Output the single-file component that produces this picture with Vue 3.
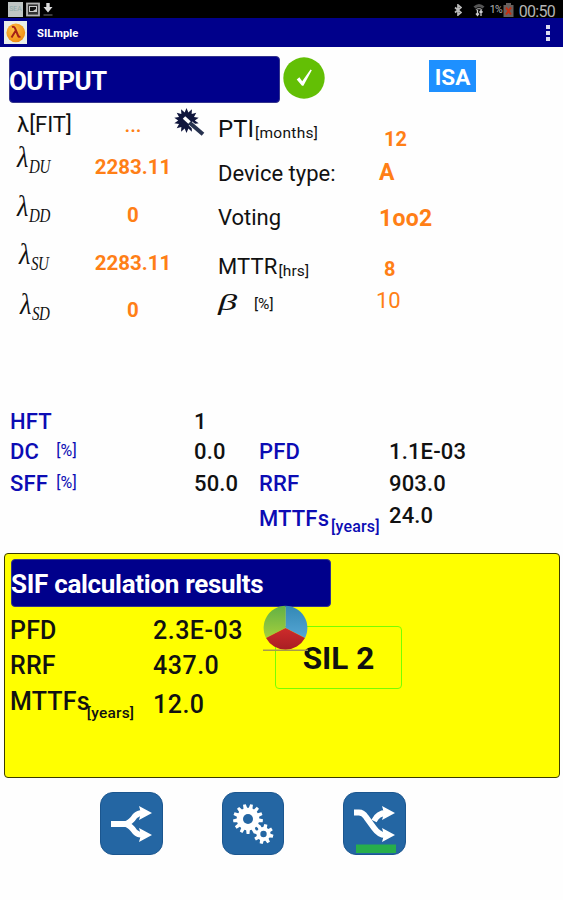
<template>
  <div class="screen">
    <div class="status-bar">
      <div class="status-left">
        <span class="thumb">SEA</span>
        <svg width="14" height="15" viewBox="0 0 14 15">
          <rect x="1" y="1.5" width="12" height="12" fill="#333" stroke="#b4b4b4" stroke-width="1.8" />
          <path d="M3 4H11V10H3Z" fill="#ccc" />
          <path d="M4 5H10V7L7 9H4Z" fill="#111" />
        </svg>
        <svg width="10" height="15" viewBox="0 0 10 15">
          <path d="M3.3 1H6.7V5H9.5L5 10.5L.5 5H3.3Z" fill="#ddd" />
          <path d="M.5 13H9.5" stroke="#555" stroke-width="1.4" />
        </svg>
      </div>
      <div class="status-right">
        <svg class="bluetooth" width="8" height="12" viewBox="0 0 8 12">
          <path d="M1 3.5L7 8.5L4 11V1L7 3.5L1 8.5" fill="none" stroke="#bbb" stroke-width="1.7" />
        </svg>
        <svg class="wifi" width="12" height="14" viewBox="0 0 12 14">
          <path d="M.5 3.5Q6 -1.5 11.5 3.5L9.5 5.5Q6 2.5 2.5 5.5Z" fill="#555" />
          <path d="M3 7Q6 4 9 7" fill="none" stroke="#888" stroke-width="1.3" />
          <path d="M4.5 7V12M3 10.5L4.5 12.5L6 10.5M8 13V8M6.5 9.5L8 7.5L9.5 9.5" fill="none" stroke="#ccc" stroke-width="1.3" />
        </svg>
        <span class="percent">1%</span>
        <svg class="battery" width="11" height="14" viewBox="0 0 11 14">
          <path d="M3 0H8V2H10.5V14H.5V2H3Z" fill="#69605d" />
          <path d="M3 4.5L8 11.5M8 4.5L3 11.5" stroke="#c52e10" stroke-width="2" />
        </svg>
        <span class="clock">00:50</span>
      </div>
    </div>

    <header class="app-bar">
      <svg class="logo" width="23" height="23" viewBox="0 0 23 23">
        <defs>
          <radialGradient id="orange" cx=".4" cy=".35" r=".7">
            <stop offset="0" stop-color="#ffc247" />
            <stop offset="1" stop-color="#ef8a10" />
          </radialGradient>
        </defs>
        <rect width="23" height="23" fill="#e9eee8" />
        <circle cx="11.8" cy="11.8" r="9.4" fill="url(#orange)" />
        <path d="M8 6Q10.4 5 11.3 8L14 14.5Q14.8 16.5 16.5 15.5M11.5 10L7.5 16.5" fill="none" stroke="#a52116" stroke-width="2" />
      </svg>
      <span class="app-name">SILmple</span>
      <div class="overflow"><i></i><i></i><i></i></div>
    </header>

    <div class="heading">
      <div class="banner">OUTPUT</div>
      <svg class="check" width="42" height="42" viewBox="0 0 42 42">
        <circle cx="21" cy="21" r="20.7" fill="#63bf05" />
        <path d="M13.7 22.5L16.4 20.3L19.2 24.3L27.5 12.5L28.8 13.3L20.4 28.8H19Z" fill="#fff" />
      </svg>
      <span class="isa">ISA</span>
    </div>

    <section class="inputs">
      <div class="col lambda-labels">
        <div class="fit">λ[FIT]</div>
        <div v-for="rate in rates" :key="rate.sub" class="lambda" :class="rate.sub.toLowerCase()">
          <span>λ</span><small>{{ rate.sub }}</small>
        </div>
      </div>
      <div class="col lambda-values">
        <div class="dots">...</div>
        <div v-for="rate in rates" :key="rate.sub">{{ rate.value }}</div>
      </div>
      <svg class="wand" width="32" height="30" viewBox="0 0 32 30">
        <polygon :points="burst" fill="#10163d" />
        <path d="M16.5 15.5L29 26.3" stroke="#fff" stroke-width="5.5" />
        <path d="M15 14.2L29 26.3" stroke="#27324f" stroke-width="4" />
        <path d="M10 9.5L15.5 14.5" stroke="#fff" stroke-width="3.6" />
      </svg>
      <div class="col param-labels">
        <div class="pti">PTI<small>[months]</small></div>
        <div class="device">Device type:</div>
        <div class="voting">Voting</div>
        <div class="mttr">MTTR<small>[hrs]</small></div>
        <div class="beta"><em>β</em><small>[%]</small></div>
      </div>
      <div class="col param-values">
        <div class="indent">12</div>
        <div class="big">A</div>
        <div class="big oo">1oo2</div>
        <div class="indent">8</div>
        <div class="plain">10</div>
      </div>
    </section>

    <section class="results">
      <div class="col left-labels">
        <div>HFT</div>
        <div class="dc">DC<small>[%]</small></div>
        <div class="sff">SFF<small>[%]</small></div>
      </div>
      <div class="col left-values">
        <div>1</div>
        <div>0.0</div>
        <div>50.0</div>
      </div>
      <div class="col right-labels">
        <div>PFD</div>
        <div>RRF</div>
        <div>MTTFs<small>[years]</small></div>
      </div>
      <div class="col right-values">
        <div>1.1E-03</div>
        <div>903.0</div>
        <div>24.0</div>
      </div>
    </section>

    <section class="sif">
      <div class="banner sif-title">SIF calculation results</div>
      <div class="sif-body">
        <div class="col sif-labels">
          <div>PFD</div>
          <div>RRF</div>
          <div>MTTFs<small>[years]</small></div>
        </div>
        <div class="col sif-values">
          <div>2.3E-03</div>
          <div>437.0</div>
          <div>12.0</div>
        </div>
        <div class="sil">
          SIL 2
          <svg class="pie" width="46" height="48" viewBox="0 0 46 48">
            <defs>
              <linearGradient id="green" x2="0" y2="1">
                <stop offset="0" stop-color="#62b045" />
                <stop offset="1" stop-color="#a4cf3c" />
              </linearGradient>
              <linearGradient id="blue" x2="0" y2="1">
                <stop offset="0" stop-color="#3388b5" />
                <stop offset="1" stop-color="#55a6d4" />
              </linearGradient>
              <linearGradient id="red" x2="0" y2="1">
                <stop offset="0" stop-color="#ce2b2b" />
                <stop offset="1" stop-color="#a91e24" />
              </linearGradient>
            </defs>
            <path d="M0 44.6H45V46H0Z" fill="#a79a4c" />
            <path d="M22.5 23V.8A22.2 22.2 0 0 0 3 33Z" fill="url(#green)" />
            <path d="M22.5 23V.8A22.2 22.2 0 0 1 42 33Z" fill="url(#blue)" />
            <path d="M22.5 23L42 33A22.2 22.2 0 0 1 3 33Z" fill="url(#red)" />
          </svg>
        </div>
      </div>
    </section>

    <nav class="actions">
      <button>
        <svg width="62" height="63" viewBox="0 0 62 63">
          <path d="M10 31H25Q30 29 34 23Q37 20 42 20M25 31Q30 33 34 39Q37 42 42 42" fill="none" stroke="#fff" stroke-width="5.8" />
          <path d="M38 13L51 20L38 27L40 20ZM38 35L51 42L38 49L40 42Z" fill="#fff" />
        </svg>
      </button>
      <button>
        <svg width="62" height="63" viewBox="0 0 62 63">
          <polygon :points="bigGear" fill="#fff" />
          <circle cx="25" cy="26" r="5" fill="#2466a3" />
          <polygon :points="smallGear" fill="#fff" />
          <circle cx="40.5" cy="41" r="3.2" fill="#2466a3" />
        </svg>
      </button>
      <button>
        <svg width="62" height="63" viewBox="0 0 62 63">
          <path d="M10 19.5H15Q19 19.5 22 24L30 35Q35 42 41 42" fill="none" stroke="#fff" stroke-width="5.8" />
          <path d="M30 28Q34 20 42 20" fill="none" stroke="#fff" stroke-width="5.8" />
          <path d="M38 13L51 20L38 27L40 20ZM38 35L51 42L38 49L40 42Z" fill="#fff" />
          <rect x="12" y="51.5" width="40" height="8.5" fill="#27ae4b" />
        </svg>
      </button>
    </nav>
  </div>
</template>

<script setup>
const rates = [
  { sub: 'DU', value: '2283.11' },
  { sub: 'DD', value: '0' },
  { sub: 'SU', value: '2283.11' },
  { sub: 'SD', value: '0' }
]

function star(cx, cy, outer, inner, count) {
  return Array.from({ length: count * 2 }, (_, i) => {
    const r = i % 2 ? inner : outer
    const a = (i * Math.PI) / count - Math.PI / 2
    return `${cx + r * Math.cos(a)},${cy + r * Math.sin(a)}`
  }).join(' ')
}

// Flat-topped teeth: two points on the outer radius, two on the inner one
function gear(cx, cy, outer, inner, teeth) {
  const pts = []
  for (let i = 0; i < teeth; i++) {
    const offsets = [[-0.34, inner], [-0.2, outer], [0.2, outer], [0.34, inner]]
    for (const [shift, r] of offsets) {
      const a = ((i + shift) * 2 * Math.PI) / teeth - Math.PI / 2 + 0.24
      pts.push(`${cx + r * Math.cos(a)},${cy + r * Math.sin(a)}`)
    }
  }
  return pts.join(' ')
}

const burst = star(12.5, 12.5, 12.5, 8.3, 14)
const bigGear = gear(25, 26, 15, 11.3, 13)
const smallGear = gear(40.5, 41, 10, 7, 8)
</script>

<style>
body {
  margin: 0;
  background: #fff;
}
</style>

<style scoped>
.screen {
  width: 563px;
  height: 900px;
  overflow: hidden;
  background: #fefefe;
  color: #111;
  font-family: Roboto, "Liberation Sans", sans-serif;
  white-space: nowrap;
}

svg {
  display: block;
  flex: none;
}

.status-bar {
  display: flex;
  justify-content: space-between;
  height: 18px;
  background: #000;
  color: #b4b4b4;
}

.status-left {
  display: flex;
  gap: 3px;
  padding: 2px 0 0 8px;
}

.thumb {
  width: 15px;
  height: 15px;
  background: #bfc5c4;
  color: #8faaa7;
  font-size: 7px;
  line-height: 14px;
  text-align: center;
}

.status-right {
  display: flex;
  align-items: flex-start;
  padding-right: 8px;
}

.bluetooth {
  margin: 4px 11px 0 0;
}

.wifi {
  margin: 3px 5px 0 0;
}

.percent {
  width: 13px;
  font-size: 10.5px;
  line-height: 20px;
  letter-spacing: -0.5px;
}

.battery {
  margin: 3px 5px 0 0;
}

.clock {
  font-size: 16px;
  line-height: 24px;
  letter-spacing: -0.7px;
}

.app-bar {
  display: flex;
  align-items: center;
  height: 29px;
  padding: 0 13px 0 4px;
  background: #00008b;
  color: #fff;
}

.app-name {
  flex: 1;
  padding: 1px 0 0 10px;
  font-size: 11.2px;
  font-weight: 700;
}

.overflow {
  display: grid;
  gap: 2px;
}

.overflow i {
  width: 4px;
  height: 4px;
  background: #dcdcf0;
}

.heading {
  display: flex;
  height: 56px;
  padding: 9px 0 0 9px;
  box-sizing: border-box;
}

.banner {
  width: 271px;
  height: 47px;
  border: 1px solid #34348c;
  border-radius: 4px;
  box-sizing: border-box;
  background: #00008b;
  color: #fff;
  font-size: 26px;
  font-weight: 700;
  line-height: 48px;
  letter-spacing: -0.6px;
  text-indent: -1px;
}

.check {
  margin: 1px 0 0 3px;
}

.isa {
  width: 47px;
  height: 32px;
  margin: 4px 0 0 104px;
  background: #1e90ff;
  color: #fff;
  font-size: 22.5px;
  font-weight: 700;
  line-height: 34px;
  text-align: center;
}

.inputs {
  display: flex;
  height: 303px;
}

.col {
  display: grid;
  align-content: start;
  align-items: center;
  flex: none;
}

.col > div {
  display: flex;
  align-items: center;
  line-height: 20px;
}

.lambda-labels {
  grid-template-rows: 42px 44px 52px 44px 50px;
  width: 67px;
  padding-left: 17px;
}

.fit {
  padding-top: 1px;
  font-size: 22px;
}

.lambda {
  font-family: "Liberation Serif", serif;
  font-style: italic;
  font-size: 29px;
}

.lambda span {
  position: relative;
  top: -10px;
  width: 12px;
  transform: scaleX(.9);
  transform-origin: left;
}

.lambda small {
  font-size: 19.5px;
  letter-spacing: -0.6px;
  transform: scaleX(.77);
  transform-origin: left;
}

.lambda.dd {
  padding-top: 1px;
}

.lambda.su {
  padding: 1px 0 0 2px;
}

.lambda.sd {
  padding: 7px 0 0 3px;
}

.lambda-values {
  grid-template-rows: 42px 44px 52px 44px 50px;
  justify-items: center;
  width: 98px;
  color: #ff7f16;
  font-size: 20.5px;
  font-weight: 700;
}

.lambda-values .dots {
  padding-top: 1px;
  font-weight: 500;
}

.wand {
  margin: 5px 0 0 -8px;
}

.param-labels {
  grid-template-rows: 44px 45px 44px 52px 20px;
  width: 158px;
  margin-left: 12px;
  padding-top: 4px;
  font-size: 22px;
}

.param-labels .pti {
  font-size: 24px;
}

.param-labels small {
  position: relative;
  top: 4px;
  left: 1px;
  font-size: 15.5px;
}

.pti small {
  letter-spacing: 0.3px;
}

.param-labels .mttr {
  padding-top: 1px;
  letter-spacing: 0.15px;
}

.beta em {
  width: 36px;
  font-family: "Liberation Serif", serif;
  font-size: 24px;
  transform: scaleX(1.6);
  transform-origin: left;
}

.beta small {
  top: 2px;
  left: 0;
}

.param-values {
  grid-template-rows: 34px 34px 56px 46px 18px;
  padding-top: 19px;
  color: #ff7f16;
  font-size: 20px;
  font-weight: 700;
}

.indent {
  padding-left: 8px;
}

.big {
  padding-left: 3px;
  font-size: 23px;
}

.oo {
  padding-top: 1px;
  letter-spacing: 0.3px;
}

.plain {
  font-size: 22px;
  font-weight: 400;
}

.results {
  display: flex;
  height: 147px;
  font-size: 22px;
  font-weight: 500;
}

.left-labels,
.left-values {
  grid-template-rows: 31px 29px 35px;
}

.left-labels,
.right-labels {
  color: #0c0cb4;
}

.left-labels {
  width: 184px;
  padding-left: 10px;
  letter-spacing: 0.2px;
}

.left-labels small {
  position: relative;
  top: -1px;
  font-size: 16px;
  font-weight: 400;
}

.dc small {
  margin-left: 17px;
}

.sff small {
  margin-left: 8px;
}

.left-values {
  width: 65px;
  letter-spacing: 0.15px;
}

.right-labels {
  grid-template-rows: 29px 35px 35px;
  width: 130px;
  padding-top: 31px;
  letter-spacing: 0.15px;
}

.right-labels small {
  position: relative;
  top: 8px;
  left: 2px;
  font-size: 16px;
}

.right-values {
  grid-template-rows: 29px 35px 29px;
  padding-top: 31px;
  letter-spacing: 0.15px;
}

.sif {
  height: 225px;
  margin: 0 3px 0 4px;
  padding: 5px 0 0 6px;
  border: 1px solid #3c3c00;
  border-radius: 4px;
  box-sizing: border-box;
  background: #ff0;
}

.sif-title {
  width: 320px;
  height: 48px;
  line-height: 49px;
  letter-spacing: -0.3px;
}

.sif-body {
  display: flex;
  height: 120px;
  margin-left: -2px;
  font-size: 25px;
  font-weight: 500;
}

.sif-labels {
  grid-template-rows: 35px 35px 37px;
  width: 143px;
  padding: 6px 0 0 1px;
  letter-spacing: 0.2px;
}

.sif-values {
  grid-template-rows: 35px 35px 43px;
  width: 122px;
  padding-top: 6px;
  letter-spacing: 0.5px;
}

.sif-labels small {
  position: relative;
  top: 11px;
  left: -3px;
  font-size: 15.5px;
}

.sil {
  position: relative;
  width: 127px;
  height: 63px;
  margin-top: 19px;
  border: 1.5px solid #7f0;
  border-radius: 4px;
  box-sizing: border-box;
  font-size: 31.5px;
  font-weight: 700;
  line-height: 64px;
  text-align: center;
}

.pie {
  position: absolute;
  top: -22px;
  left: -13px;
}

.actions {
  display: flex;
  gap: 59px;
  padding: 14px 0 0 100px;
}

.actions button {
  width: 62.5px;
  height: 63px;
  padding: 0;
  border: 1px solid #1b568f;
  border-radius: 13px;
  box-sizing: border-box;
  overflow: hidden;
  background: #2466a3;
}
</style>
